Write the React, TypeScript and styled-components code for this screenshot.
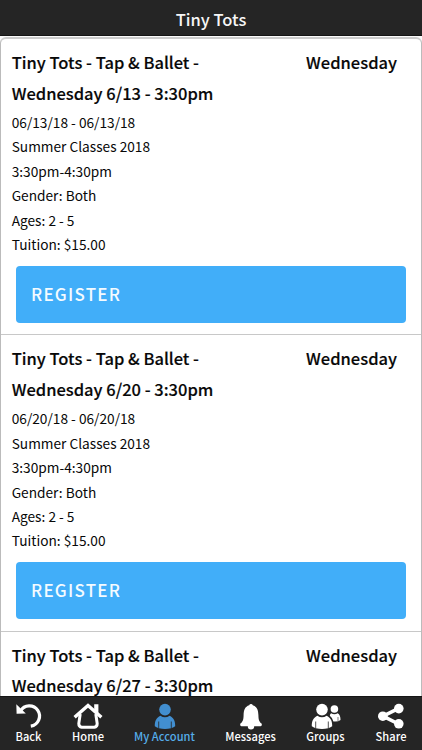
import React from "react";
import styled, { createGlobalStyle } from "styled-components";

const GlobalStyle = createGlobalStyle`
  * { box-sizing: border-box; }
  body { margin: 0; background: #fff; font-family: "Noto Sans CJK SC", "Noto Sans", sans-serif; color: #080808; }
`;

const Screen = styled.div`
  display: flex;
  flex-direction: column;
  height: 750px;
  overflow: hidden;
`;

const Header = styled.header`
  flex: none;
  height: 36px;
  padding-top: 4px;
  background: #252525;
  color: #f6f6f6;
  font-size: 16.5px;
  font-weight: 500;
  line-height: 31px;
  text-align: center;
  border-bottom: 1px solid #151515;
`;

const Viewport = styled.main`
  flex: 1;
  min-height: 0;
  padding-top: 1px;
  background: #fafafa;
  overflow: hidden;
`;

const ClassList = styled.ul`
  list-style: none;
  margin: 0;
  padding: 0;
  background: #fff;
  border: 1px solid #bbb;
  border-top: 2px solid #ccc;
  border-radius: 6px;
`;

const ClassItem = styled.li`
  height: 296.4px;
  padding: 7.8px 15px 0 10.7px;
  border-bottom: 1.5px solid #c8c8c8;
`;

const TitleRow = styled.div`
  display: flex;
  justify-content: space-between;
  padding-right: 9px;
  margin-bottom: 1.7px;
  font-size: 16.5px;
  font-weight: 500;
  -webkit-text-stroke: 0.15px currentColor;
  line-height: 30.7px;
  white-space: nowrap;
`;

const ClassTitle = styled.h2`
  margin: 0;
  font: inherit;
`;

const Detail = styled.div`
  font-size: 13.7px;
  line-height: 24.4px;
  white-space: nowrap;
`;

const RegisterButton = styled.button`
  display: block;
  width: 390px;
  height: 57px;
  margin: 9.4px 0 0 4.3px;
  padding: 0 15px 2px;
  border: 0;
  border-radius: 4px;
  background: #41aef9;
  color: #f4fbff;
  font: 500 17px "Noto Sans CJK SC", sans-serif;
  letter-spacing: 1.25px;
  text-align: left;
`;

const TabBar = styled.nav`
  flex: none;
  display: grid;
  grid-template-columns: 57px 62px 91px 81px 69px 62px;
  height: 54px;
  background: #252525;
  border-top: 1px solid #151515;
`;

const Tab = styled.a<{ $active?: boolean }>`
  display: flex;
  flex-direction: column;
  align-items: center;
  padding-top: 6px;
  color: ${(p) => (p.$active ? "#55aeea" : "#fff")};
`;

const TabIcon = styled.svg<{ $active?: boolean }>`
  display: block;
  width: 30px;
  height: 26px;
  overflow: visible;
  color: ${(p) => (p.$active ? "#428fd0" : "#fff")};
`;

const TabLabel = styled.span`
  font-size: 11.1px;
  font-weight: 500;
  letter-spacing: 0.05px;
  line-height: 16px;
  margin-top: -1px;
  white-space: nowrap;
`;

const person = (
  <>
    <circle cx="15" cy="6.6" r="5.8" />
    <path d="M10.4 12.7C6.5 14.5 4.6 18 4.8 23.2Q7 24.8 9 25.2Q15 26.7 21 25.2Q23 24.8 25.2 23.2C25.4 18 23.5 14.5 19.6 12.7Q15 16 10.4 12.7Z" />
    <path d="M8.7 18.5v6.5M21.3 18.5v6.5" stroke="#252525" strokeWidth=".8" fill="none" />
  </>
);

const icons = {
  back: (
    <>
      <path d="M6.5 8A10.2 10.2 0 1 1 16.8 23.2" fill="none" stroke="currentColor" strokeWidth="3.2" />
      <path d="M2.3 1.2L2.6 10.8L11.8 10.4Z" />
    </>
  ),
  home: (
    <>
      <path d="M1.6 14.2L15 2.4L28.4 14.2" fill="none" stroke="currentColor" strokeWidth="3.4" />
      <path d="M21.2 1.2h4.2v10l-4.2-3z" />
      <path d="M7.2 11L5.8 20.5Q5.8 23.8 8.6 24.2H21.4Q24.2 23.8 24.2 20.5L22.8 11" fill="none" stroke="currentColor" strokeWidth="3" />
    </>
  ),
  account: person,
  messages: (
    <path d="M13.2 2.2A1.9 1.9 0 0 1 16.8 2.2C21 3.6 22.2 6.8 22.4 12C22.5 17 23.2 18.7 25.6 20.6Q26.4 23 24.6 23.2H18.2A3.2 3.2 0 0 1 11.8 23.2H5.4Q3.6 23 4.4 20.6C6.8 18.7 7.5 17 7.6 12C7.8 6.8 9 3.6 13.2 2.2Z" />
  ),
  groups: (
    <>
      <g transform="translate(-4 0)">{person}</g>
      <circle cx="23.4" cy="6" r="3.8" />
      <path d="M20.1 10.2Q23.4 12.2 26.7 10.2Q29.6 11.8 29.5 17Q26.8 19 22.4 18.4Q21.3 14.6 18.8 12.8Q19 11 20.1 10.2Z" />
      <path d="M27 14v4" stroke="#252525" strokeWidth=".6" />
    </>
  ),
  share: (
    <>
      <path d="M22.6 5.4L7 13.2L22.6 21" fill="none" stroke="currentColor" strokeWidth="3.6" />
      <circle cx="22.8" cy="5.6" r="4.8" />
      <circle cx="6.8" cy="13.2" r="4.8" />
      <circle cx="22.8" cy="20.8" r="4.8" />
    </>
  ),
};

const tabs: { icon: keyof typeof icons; label: string; active?: boolean }[] = [
  { icon: "back", label: "Back" },
  { icon: "home", label: "Home" },
  { icon: "account", label: "My Account", active: true },
  { icon: "messages", label: "Messages" },
  { icon: "groups", label: "Groups" },
  { icon: "share", label: "Share" },
];

const dates = ["6/13", "6/20", "6/27"];

export default function App() {
  return (
    <Screen>
      <GlobalStyle />
      <Header>Tiny Tots</Header>
      <Viewport>
        <ClassList>
          {dates.map((date) => (
            <ClassItem key={date}>
              <TitleRow>
                <ClassTitle>
                  Tiny Tots - Tap &amp; Ballet -<br />
                  Wednesday {date} - 3:30pm
                </ClassTitle>
                <span>Wednesday</span>
              </TitleRow>
              <Detail>{`0${date}/18 - 0${date}/18`}</Detail>
              <Detail>Summer Classes 2018</Detail>
              <Detail>3:30pm-4:30pm</Detail>
              <Detail>Gender: Both</Detail>
              <Detail>Ages: 2 - 5</Detail>
              <Detail>Tuition: $15.00</Detail>
              <RegisterButton>REGISTER</RegisterButton>
            </ClassItem>
          ))}
        </ClassList>
      </Viewport>
      <TabBar>
        {tabs.map((tab) => (
          <Tab key={tab.label} $active={tab.active}>
            <TabIcon $active={tab.active} viewBox="0 0 30 26" fill="currentColor">
              {icons[tab.icon]}
            </TabIcon>
            <TabLabel>{tab.label}</TabLabel>
          </Tab>
        ))}
      </TabBar>
    </Screen>
  );
}
